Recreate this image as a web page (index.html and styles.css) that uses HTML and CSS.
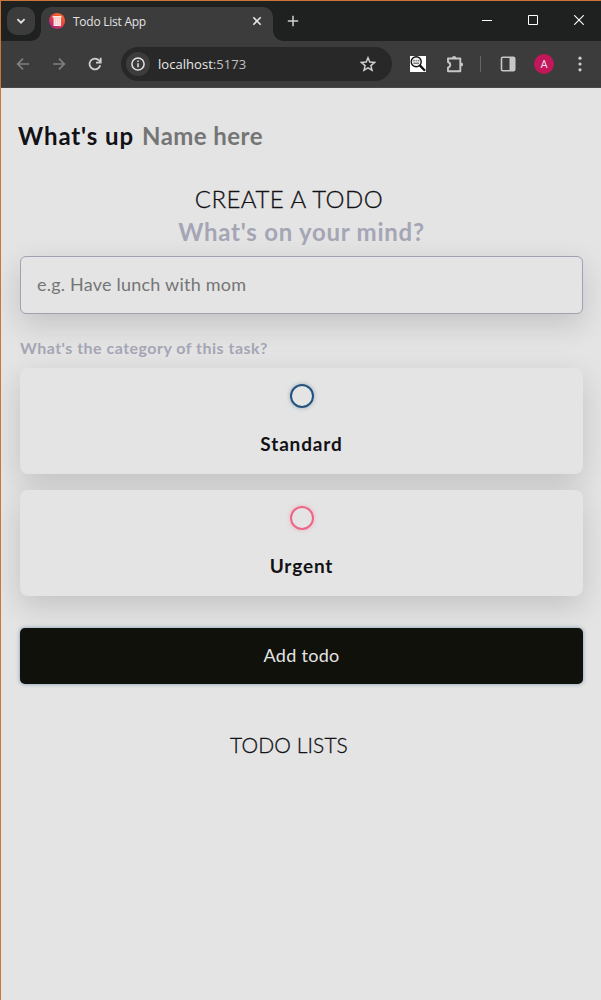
FILE: index.html
```html
<!DOCTYPE html>
<html lang="en">
<head>
<meta charset="utf-8">
<title>Todo List App</title>
<link rel="stylesheet" href="styles.css">
</head>
<body>
<div class="window">
  <header class="tabstrip">
    <div class="tab-search">
      <svg width="28" height="28" viewBox="0 0 28 28" fill="none" stroke="#e3e3e3" stroke-width="1.8"><path d="M10.4 12.2 14 15.7l3.6-3.5"/></svg>
    </div>
    <div class="tab">
      <svg class="favicon" width="16" height="16" viewBox="0 0 16 16">
        <defs><linearGradient id="fav" x1="0.15" y1="1" x2="0.8" y2="0.1"><stop offset="0" stop-color="#9b1f8c"/><stop offset=".5" stop-color="#e23c50"/><stop offset="1" stop-color="#fb6a25"/></linearGradient></defs>
        <circle cx="8" cy="8" r="8" fill="url(#fav)"/>
        <path fill="#ffe9e6" d="M3.6 3h8.8v1.6H12V13H4.6V4.6h-1z"/>
        <path stroke="#f3a3a0" stroke-width=".5" d="M6.3 5.2v6.8M8.3 5.2v6.8M10.3 5.2v6.8M4.6 4.8H12"/>
      </svg>
      <span class="tab-title">Todo List App</span>
      <svg class="tab-close" width="10" height="10" viewBox="0 0 10 10" stroke="#e3e3e3" stroke-width="1.6"><path d="m1.3 1.3 7.4 7.4M8.7 1.3 1.3 8.7"/></svg>
    </div>
    <svg class="new-tab" width="12" height="12" viewBox="0 0 12 12" stroke="#d0d0d0" stroke-width="1.5"><path d="M6 .8v10.4M.8 6h10.4"/></svg>
    <div class="controls">
      <svg width="10" height="10" viewBox="0 0 10 10" stroke="#fff"><path d="M0 5.5h10"/></svg>
      <svg width="10" height="10" viewBox="0 0 10 10" stroke="#fff" fill="none"><path d="M.5.5h9v9h-9z"/></svg>
      <svg width="10" height="10" viewBox="0 0 10 10" stroke="#fff" stroke-width="1.1"><path d="m.2.2 9.6 9.6M9.8.2.2 9.8"/></svg>
    </div>
  </header>
  <div class="toolbar">
    <div class="nav">
      <svg width="16" height="16" viewBox="0 0 16 16" fill="none" stroke="#808080" stroke-width="1.7"><path d="M14 8H3M8 2.7 2.7 8 8 13.3"/></svg>
      <svg width="16" height="16" viewBox="0 0 16 16" fill="none" stroke="#808080" stroke-width="1.7"><path d="M2 8h11M8 2.7 13.3 8 8 13.3"/></svg>
      <svg width="16" height="16" viewBox="0 0 16 16" fill="none" stroke="#d0d0d0" stroke-width="1.8"><path d="M13.2 9.2A5.4 5.4 0 1 1 12 4.4L13.6 6"/><path d="M13.7 1.8v4.8H9"/></svg>
    </div>
    <div class="omnibox">
      <span class="info"><svg width="14" height="14" viewBox="0 0 14 14" fill="none" stroke="#e3e3e3" stroke-width="1.5"><circle cx="7" cy="7" r="6.1"/><path d="M7 6.2v4M7 3.6v1.5"/></svg></span>
      <span class="url">localhost<span class="port">:5173</span></span>
      <svg class="star" width="16" height="16" viewBox="0 0 16 16" fill="none" stroke="#d0d0d0" stroke-width="1.5"><path d="m8 1.8 1.8 4.3 4.7.4-3.6 3.1 1.1 4.6L8 11.8l-4 2.4 1.1-4.6L1.5 6.5l4.7-.4z"/></svg>
    </div>
    <div class="actions">
      <svg width="16" height="16" viewBox="0 0 16 16"><path fill="#fff" d="M0 0h16v16H0z"/><circle cx="6.2" cy="5.8" r="5" fill="#eee" stroke="#111" stroke-width="1.4"/><path stroke="#111" stroke-width="2.3" d="m9.8 9.4 5.2 5.4"/><path stroke="#333" stroke-width=".9" d="M3.2 4.8h1.6M5.6 4.8h1.2M7.6 4.8h1.6M3.4 7.2h5.6"/></svg>
      <svg width="18" height="18" viewBox="0 0 18 18" fill="none" stroke="#c7c7c7" stroke-width="1.9" stroke-linejoin="round"><path d="M2 3.5h12.3v12.7H2v-3.5c3-1 3-4.7 0-5.7z"/><path fill="#c7c7c7" stroke="none" d="M6 3a2.1 2.1 0 0 1 4.2 0zM15 7.4a2.1 2.1 0 0 1 0 4.2z"/></svg>
      <span class="divider"></span>
      <svg width="16" height="16" viewBox="0 0 16 16"><path fill="#c7c7c7" d="M9.5 1H14v14H9.5z"/><rect x="1.5" y="1.3" width="13.2" height="13.4" rx="1.3" fill="none" stroke="#c7c7c7" stroke-width="1.6"/></svg>
      <span class="avatar">A</span>
      <svg width="4" height="16" viewBox="0 0 4 16" fill="#d0d0d0"><circle cx="2" cy="2.2" r="1.6"/><circle cx="2" cy="8" r="1.6"/><circle cx="2" cy="13.8" r="1.6"/></svg>
    </div>
  </div>
  <main class="page">
    <h2 class="greeting"><span class="hello">What's up</span><input class="name" type="text" placeholder="Name here"></h2>
    <h3 class="create-title">CREATE A TODO</h3>
    <form class="create">
      <h4 class="question">What's on your mind?</h4>
      <input class="content" type="text" placeholder="e.g. Have lunch with mom">
      <h4 class="category">What's the category of this task?</h4>
      <div class="options">
        <label class="option"><span class="bubble standard"></span><span class="option-label">Standard</span></label>
        <label class="option"><span class="bubble urgent"></span><span class="option-label">Urgent</span></label>
      </div>
      <button class="submit" type="button">Add todo</button>
    </form>
    <h3 class="lists-title">TODO LISTS</h3>
  </main>
</div>
</body>
</html>
```
FILE: styles.css
```css
* { box-sizing: border-box; margin: 0; padding: 0; }
body { background: #e4e4e4; font-family: Lato, "Open Sans", sans-serif; color: #111116; }
svg { display: block; flex: none; }
.window { width: 601px; height: 1000px; border: 1px solid #cb7638; border-width: 1px 0 0 1px; overflow: hidden; display: flex; flex-direction: column; }

.tabstrip { flex: none; height: 40px; background: #1f2120; display: flex; align-items: flex-start; padding: 6px 0 0 6px; }
.tab-search { width: 28px; height: 28px; border-radius: 10px; background: #3c3c3c; }
.tab { position: relative; width: 232px; height: 34px; margin-left: 6px; background: #3c3c3c; border-radius: 10px 10px 0 0; display: flex; align-items: center; padding: 0 11px 6px 8px; }
.tab::before, .tab::after { content: ""; position: absolute; bottom: 0; width: 10px; height: 10px; }
.tab::before { left: -10px; background: radial-gradient(circle at 0 0, transparent 9.5px, #3c3c3c 10px); }
.tab::after { right: -10px; background: radial-gradient(circle at 100% 0, transparent 9.5px, #3c3c3c 10px); }
.tab-title { margin-left: 8px; padding-top: 1px; flex: 1; font: 12px/16px "Open Sans", sans-serif; color: #e3e3e3; letter-spacing: -.25px; white-space: nowrap; }
.new-tab { margin: 8px 0 0 14px; }
.controls { flex: 1; display: flex; justify-content: flex-end; gap: 36px; padding: 8px 17px 0 0; }

.toolbar { flex: none; height: 47px; background: #3c3c3c; border-bottom: 1px solid #484848; display: flex; align-items: center; }
.nav { display: flex; gap: 20px; padding-left: 14px; width: 120px; flex: none; }
.omnibox { width: 271px; height: 34px; flex: none; border-radius: 17px; background: #282828; display: flex; align-items: center; padding: 0 16px 0 5px; }
.info { width: 24px; height: 24px; border-radius: 50%; background: #3c3c3c; display: flex; align-items: center; justify-content: center; }
.url { flex: 1; margin-left: 8px; font: 13px/20px "Open Sans", sans-serif; color: #e8e8e8; letter-spacing: .04px; }
.port { color: #c0c0c0; }
.actions { flex: 1; display: flex; align-items: center; padding-left: 18px; }
.actions svg:nth-child(2) { margin-left: 20px; }
.divider { width: 1px; height: 16px; margin-left: 16px; background: #666; }
.actions svg:nth-child(4) { margin-left: 19px; }
.avatar { width: 20px; height: 20px; margin-left: 18px; border-radius: 50%; background: #c2185b; color: #f4dfe8; font: 11px/21px Roboto, sans-serif; text-align: center; }
.actions svg:last-child { margin-left: 24px; }

.page { flex: 1; padding: 32px 18px 0 17px; }
input { border: 0; outline: 0; background: none; font: inherit; color: inherit; min-width: 0; }
input::placeholder { color: #757575; opacity: 1; }
.greeting { display: flex; height: 32px; font-size: 24px; line-height: 32px; font-weight: 700; white-space: nowrap; }
.hello { width: 124px; letter-spacing: .9px; }
.name { flex: 1; letter-spacing: .45px; }
.create-title { margin-top: 31px; height: 32px; padding-right: 23px; text-align: center; font-size: 24px; line-height: 32px; font-weight: 300; letter-spacing: .5px; -webkit-text-stroke: .3px; }
.create { margin: 1px 0 0 2px; }
.question { height: 32px; text-align: center; font-size: 24px; line-height: 32px; font-weight: 700; color: #a5a6b5; letter-spacing: .75px; }
.content { display: block; width: 100%; height: 58px; margin-top: 8px; padding: 0 16px 2px; border: 1px solid #a0a1b2; border-radius: 6px; background: #e4e4e4; font-size: 18px; letter-spacing: .22px; box-shadow: 0 10px 30px rgba(0,0,0,.15); }
.category { margin-top: 23px; height: 22px; font-size: 16px; line-height: 22px; font-weight: 700; color: #a5a6b5; letter-spacing: .48px; }
.options { margin-top: 9px; display: grid; gap: 16px; }
.option { height: 106px; border-radius: 8px; background: #e4e4e4; box-shadow: 0 10px 30px rgba(0,0,0,.15); display: flex; flex-direction: column; align-items: center; padding-top: 16px; }
.bubble { width: 24px; height: 24px; border-radius: 50%; border: 2px solid #24527e; box-shadow: 0 0 4px rgba(36,82,126,.4); }
.bubble.urgent { border-color: #ef6587; box-shadow: 0 0 4px rgba(239,101,135,.4); }
.option-label { margin-top: 23px; font-size: 19px; line-height: 26px; font-weight: 700; letter-spacing: .85px; }
.submit { position: relative; display: block; width: 100%; height: 56px; margin-top: 32px; padding-bottom: 2px; border: 0; border-radius: 5px; background: #10110a; color: #e4e4e4; font: 18px/24px Lato, sans-serif; letter-spacing: .3px; box-shadow: 0 0 4px rgba(58,100,140,.6); }
.lists-title { margin-top: 45px; padding-right: 23px; height: 32px; text-align: center; font-size: 21px; line-height: 32px; font-weight: 300; letter-spacing: .1px; -webkit-text-stroke: .3px; }
```
